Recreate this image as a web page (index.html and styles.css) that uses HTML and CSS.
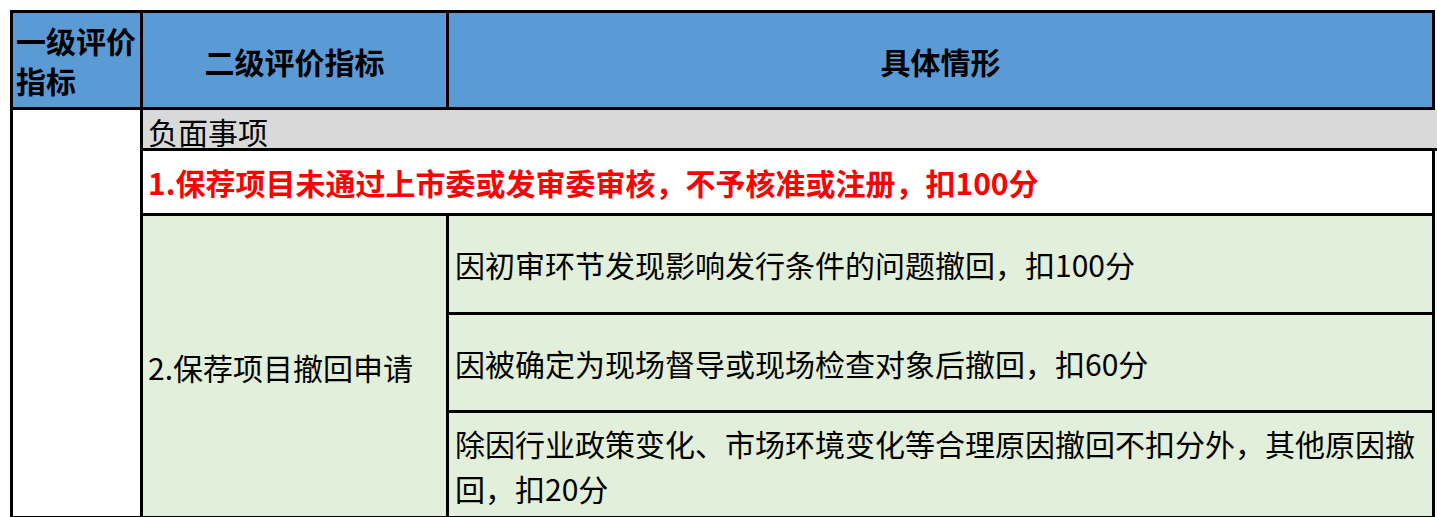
FILE: index.html
```html
<!DOCTYPE html>
<html lang="zh-CN">
<head>
<meta charset="utf-8">
<title>评价指标</title>
<link rel="stylesheet" href="styles.css">
</head>
<body>
<div class="sheet">
  <div class="cell head head-left"><span>一级评价<br>指标</span></div>
  <div class="cell head head-center">二级评价指标</div>
  <div class="cell head head-center">具体情形</div>

  <div class="cell first-col"></div>

  <div class="cell gray-row">负面事项</div>
  <div class="cell red-row">1.保荐项目未通过上市委或发审委审核，不予核准或注册，扣100分</div>

  <div class="cell green level2">2.保荐项目撤回申请</div>
  <div class="cell green detail r1">因初审环节发现影响发行条件的问题撤回，扣100分</div>
  <div class="cell green detail r2">因被确定为现场督导或现场检查对象后撤回，扣60分</div>
  <div class="cell green detail r3"><span>除因行业政策变化、市场环境变化等合理原因撤回不扣分外，其他原因撤回，扣20分</span></div>
</div>
</body>
</html>
```

FILE: styles.css
```css
html, body {
  margin: 0;
  padding: 0;
  background: #ffffff;
}

body {
  font-family: "Noto Sans CJK SC", "Microsoft YaHei", sans-serif;
  font-size: 30px;
  color: #000000;
}

.sheet {
  display: grid;
  grid-template-columns: 130px 306px 986px;
  grid-template-rows: 97px 41px 65px 99px 98px 106px;
  width: max-content;
  margin: 10px 0 0 10px;
  border-top: 3px solid #000;
  border-left: 3px solid #000;
}

.cell {
  box-sizing: border-box;
  border-right: 3px solid #000;
  border-bottom: 3px solid #000;
  display: flex;
  align-items: center;
  overflow: hidden;
  white-space: nowrap;
}

.head {
  background: #5b9bd5;
  font-weight: 700;
}

.head-left {
  padding-left: 3px;
  line-height: 40px;
}

.head-center {
  justify-content: center;
  line-height: 30px;
  padding-top: 2px;
}

.first-col {
  grid-column: 1;
  grid-row: 2 / 7;
  background: #ffffff;
}

.gray-row {
  grid-column: 2 / 4;
  grid-row: 2;
  background: #d9d9d9;
  border-right: none;
  margin-right: -3px;
  line-height: 30px;
  padding: 3px 5px 0;
  overflow: visible;
}

.red-row {
  grid-column: 2 / 4;
  grid-row: 3;
  background: #ffffff;
  color: #ff0000;
  font-weight: 700;
  line-height: 30px;
  padding: 0 5px;
}

.green {
  background: #e2efda;
}

.level2 {
  grid-column: 2;
  grid-row: 4 / 7;
  line-height: 30px;
  padding: 2px 5px 0;
}

.detail {
  grid-column: 3;
  line-height: 30px;
  padding: 0 4px 0 6px;
}

.r1 { grid-row: 4; }
.r2 { grid-row: 5; }

.r3 {
  grid-row: 6;
  white-space: normal;
  line-height: 45px;
  padding-top: 3px;
}
```
